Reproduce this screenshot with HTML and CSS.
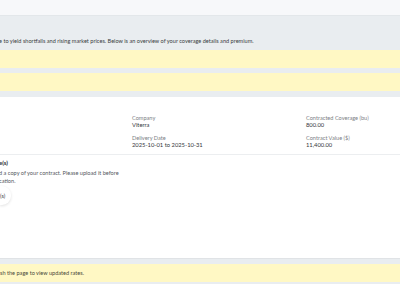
FILE: index.html
```html
<!DOCTYPE html>
<html lang="en">

<head>
    <meta charset="UTF-8">
    <meta name="viewport" content="width=device-width, initial-scale=1.0">
    <title>Coverage Overview</title>
    <link rel="stylesheet" href="styles.css">
</head>

<body>
    <div class="topbar"></div>

    <div class="page">
        <p class="intro">e to yield shortfalls and rising market prices. Below is an overview of your coverage details and premium.</p>

        <div class="notice"></div>
        <div class="notice"></div>

        <div class="card">
            <div class="details">
                <div class="spacer"></div>
                <div class="field">
                    <span class="label">Company</span>
                    <span class="value">Viterra</span>
                </div>
                <div class="field">
                    <span class="label">Contracted Coverage (bu)</span>
                    <span class="value">800.00</span>
                </div>
                <div class="spacer"></div>
                <div class="field">
                    <span class="label">Delivery Date</span>
                    <span class="value">2025-10-01 to 2025-10-31</span>
                </div>
                <div class="field">
                    <span class="label">Contract Value ($)</span>
                    <span class="value">11,400.00</span>
                </div>
            </div>

            <div class="upload">
                <h3>e(s)</h3>
                <p>d a copy of your contract. Please upload it before<br>cation.</p>
                <button type="button">(s)</button>
            </div>
        </div>

        <div class="notice notice-text">sh the page to view updated rates.</div>
    </div>
</body>

</html>
```

FILE: styles.css
```css
body {
    margin: 0;
    font-family: Lato, "Noto Sans", sans-serif;
    font-size: 5.6px;
    color: #3a3d42;
    background-color: #e9edf0;
    overflow: hidden;
}

.topbar {
    height: 15px;
    background-color: #f7f8fa;
    border-bottom: 1px solid #e3e7ea;
}

.page {
    padding-top: 21px;
}

.intro {
    margin: 0 0 0 -1px;
    line-height: 7px;
    height: 7px;
}

.notice {
    height: 18px;
    margin-top: 5px;
    background-color: #fff8c4;
}

.notice:first-of-type {
    margin-top: 6px;
}

.card {
    margin-top: 6px;
    background-color: #fff;
    border-bottom: 1px solid #e0e3e6;
    height: 161px;
}

.details {
    display: grid;
    grid-template-columns: 132px 174px 1fr;
    row-gap: 7px;
    padding: 18px 0 6px;
    border-bottom: 1px solid #eceef0;
}

.field {
    display: flex;
    flex-direction: column;
    line-height: 6px;
    gap: 1px;
}

.label {
    color: #7c8085;
}

.value {
    color: #33363a;
    font-size: 5.8px;
}

.upload {
    padding-top: 4px;
}

.upload h3 {
    margin: 0 0 0 -1px;
    font-size: 6px;
    font-weight: 700;
    color: #2a2d31;
}

.upload p {
    margin: 3px 0 0 -1px;
    line-height: 8px;
    color: #55595e;
}

.upload button {
    margin-top: 1px;
    padding: 6px 6px 6px 0;
    font-family: inherit;
    font-size: 5.6px;
    color: #3a3d42;
    background-color: #fff;
    border: none;
    border-radius: 0 9px 9px 0;
    box-shadow: 0 1px 3px rgba(0, 0, 0, 0.12);
}

.notice-text {
    margin-top: 5px;
    line-height: 18px;
    color: #4a4a3a;
}
```
